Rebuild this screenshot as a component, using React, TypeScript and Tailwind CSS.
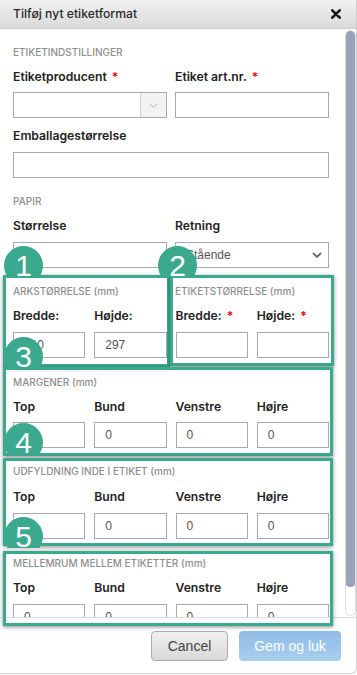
import React from "react";

const Label = ({ children, req }: { children: React.ReactNode; req?: boolean }) => (
  <div className="h-[16px] text-[12.2px] leading-[16px] font-semibold text-[#222] whitespace-nowrap">
    {children}
    {req && <span className="text-[#e60000] ml-[5px]">*</span>}
  </div>
);

const Section = ({ children, className = "" }: { children: React.ReactNode; className?: string }) => (
  <div className={"h-[12px] text-[10px] leading-[12px] font-medium text-[#8e8e8e] whitespace-nowrap " + className}>
    {children}
  </div>
);

const Field = ({ value = "", className = "" }: { value?: string; className?: string }) => (
  <div
    className={
      "h-[26px] border border-[#a9a9a9] bg-white pl-[10px] flex items-center text-[12px] text-[#555] font-['Liberation_Sans',Arial,sans-serif] " +
      className
    }
  >
    {value}
  </div>
);

const Four = ({ title, values, t1, t2, t3 }: { title: string; values: string[]; t1: string; t2: string; t3: string }) => (
  <>
    <Section className={t1}>{title}</Section>
    <div className={"grid grid-cols-4 gap-x-[9px] " + t2}>
      <Label>Top</Label>
      <Label>Bund</Label>
      <Label>Venstre</Label>
      <Label>Højre</Label>
    </div>
    <div className={"grid grid-cols-4 gap-x-[9px] " + t3}>
      {values.map((v, i) => (
        <Field key={i} value={v} />
      ))}
    </div>
  </>
);

const Box = ({ className }: { className: string }) => (
  <div
    className={
      "absolute border-[3px] border-[#3aa98e] shadow-[0_1px_4px_rgba(0,0,0,0.45)] pointer-events-none " + className
    }
  />
);

const Tab = ({ n, className }: { n: string; className: string }) => (
  <div className={"absolute w-[39px] h-[31px] overflow-hidden " + className}>
    <div className="w-[39px] h-[39px] rounded-full bg-[#3aa98e] flex items-center justify-center text-white text-[30px] leading-none font-['Liberation_Sans',Arial,sans-serif]">
      {n}
    </div>
  </div>
);

export default function App() {
  return (
    <div className="relative w-[357px] h-[675px] bg-white overflow-hidden font-['Inter',sans-serif]">
      <div className="w-[357px] h-[674px] flex flex-col border-r border-b border-[#cfcfcf] rounded-br-[6px] overflow-hidden">
        {/* Header */}
        <div className="h-[29px] shrink-0 flex items-center justify-between pl-[13px] pr-[15px] bg-gradient-to-b from-[#f1f1f1] to-[#dadada] border-b border-[#cdcdcd]">
          <span className="text-[12.2px] text-[#2a2a2a] font-medium">Tilføj nyt etiketformat</span>
          <svg width="10" height="10" viewBox="0 0 10 10" className="mb-[1px]">
            <path d="M1.3 1.3 L8.7 8.7 M8.7 1.3 L1.3 8.7" stroke="#111" strokeWidth="2.6" strokeLinecap="round" />
          </svg>
        </div>

        {/* Body */}
        <div className="flex-1 flex min-h-0">
          <div className="flex-1 overflow-hidden pl-[13px] pr-[16px] pt-[17px]">
            <Section>ETIKETINDSTILLINGER</Section>
            <div className="grid grid-cols-2 gap-x-[8px] mt-[11px]">
              <Label req>Etiketproducent</Label>
              <Label req>Etiket art.nr.</Label>
            </div>
            <div className="grid grid-cols-2 gap-x-[8px] mt-[7px]">
              <div className="h-[26px] border border-[#a9a9a9] bg-white flex justify-end">
                <div className="w-[26px] h-full bg-[#f2f2f2] border-l border-[#d0d0d0] flex items-center justify-center">
                  <svg width="9" height="5" viewBox="0 0 9 5">
                    <path d="M0.5 0.5 L4.5 4.5 L8.5 0.5" stroke="#b5b5b5" strokeWidth="1" fill="none" />
                  </svg>
                </div>
              </div>
              <Field />
            </div>
            <div className="mt-[10px]">
              <Label>Emballagestørrelse</Label>
            </div>
            <Field className="mt-[8px]" />

            <Section className="mt-[17px]">PAPIR</Section>
            <div className="grid grid-cols-2 gap-x-[8px] mt-[11px]">
              <Label>Størrelse</Label>
              <Label>Retning</Label>
            </div>
            <div className="grid grid-cols-2 gap-x-[8px] mt-[8px]">
              <Field value="" />
              <div className="h-[26px] border border-[#a9a9a9] bg-white pl-[10px] pr-[6px] flex items-center justify-between text-[12px] text-[#555] font-['Liberation_Sans',Arial,sans-serif]">
                <span>Stående</span>
                <svg width="10" height="6" viewBox="0 0 10 6">
                  <path d="M1 1 L5 5 L9 1" stroke="#666" strokeWidth="1.8" fill="none" />
                </svg>
              </div>
            </div>

            <div className="grid grid-cols-2 gap-x-[8px] mt-[17px]">
              <Section>ARKSTØRRELSE (mm)</Section>
              <Section>ETIKETSTØRRELSE (mm)</Section>
            </div>
            <div className="grid grid-cols-4 gap-x-[9px] mt-[11px]">
              <Label>Bredde:</Label>
              <Label>Højde:</Label>
              <Label req>Bredde:</Label>
              <Label req>Højde:</Label>
            </div>
            <div className="grid grid-cols-4 gap-x-[9px] mt-[8px]">
              <Field value="210" />
              <Field value="297" />
              <Field />
              <Field />
            </div>

            <Four title="MARGENER (mm)" values={["0", "0", "0", "0"]} t1="mt-[18px]" t2="mt-[11px]" t3="mt-[7px]" />
            <Four
              title="UDFYLDNING INDE I ETIKET (mm)"
              values={["0", "0", "0", "0"]}
              t1="mt-[17px]"
              t2="mt-[12px]"
              t3="mt-[8px]"
            />
            <Four
              title="MELLEMRUM MELLEM ETIKETTER (mm)"
              values={["0", "0", "0", "0"]}
              t1="mt-[18px]"
              t2="mt-[11px]"
              t3="mt-[8px]"
            />
          </div>
          {/* Scrollbar */}
          <div className="w-[11px] shrink-0 pt-[1px] pb-[1px]">
            <div className="w-[11px] h-full rounded-full border border-[#dcdcdc] overflow-hidden">
              <div className="w-[11px] h-[557px] -ml-[1px] -mt-[1px] rounded-full bg-[#97a3b7]" />
            </div>
          </div>
        </div>

        {/* Footer */}
        <div className="h-[56px] shrink-0 border-t border-[#dedede] flex justify-end items-start pt-[13px] pr-[15px] gap-[11px] font-['Liberation_Sans',Arial,sans-serif]">
          <div className="w-[77px] h-[30px] rounded-[4px] border border-[#acacac] bg-gradient-to-b from-[#f0f0f0] to-[#d9d9d9] flex items-center justify-center text-[14px] text-[#444]">
            Cancel
          </div>
          <div className="w-[102px] h-[30px] rounded-[4px] bg-gradient-to-b from-[#8fbde6] to-[#a9cdee] flex items-center justify-center text-[14px] text-white">
            Gem og luk
          </div>
        </div>
      </div>

      {/* Annotation overlays */}
      <Box className="left-[3px] top-[275px] w-[167px] h-[92px]" />
      <Box className="left-[170px] top-[275px] w-[164px] h-[91px]" />
      <Box className="left-[3px] top-[367px] w-[330px] h-[89px]" />
      <Box className="left-[3px] top-[458px] w-[330px] h-[88px]" />
      <Box className="left-[3px] top-[551px] w-[330px] h-[75px]" />
      <Tab n="1" className="left-[4px] top-[246px]" />
      <Tab n="2" className="left-[158px] top-[246px]" />
      <Tab n="3" className="left-[4px] top-[337px]" />
      <Tab n="4" className="left-[4px] top-[423px]" />
      <Tab n="5" className="left-[4px] top-[517px]" />
    </div>
  );
}
